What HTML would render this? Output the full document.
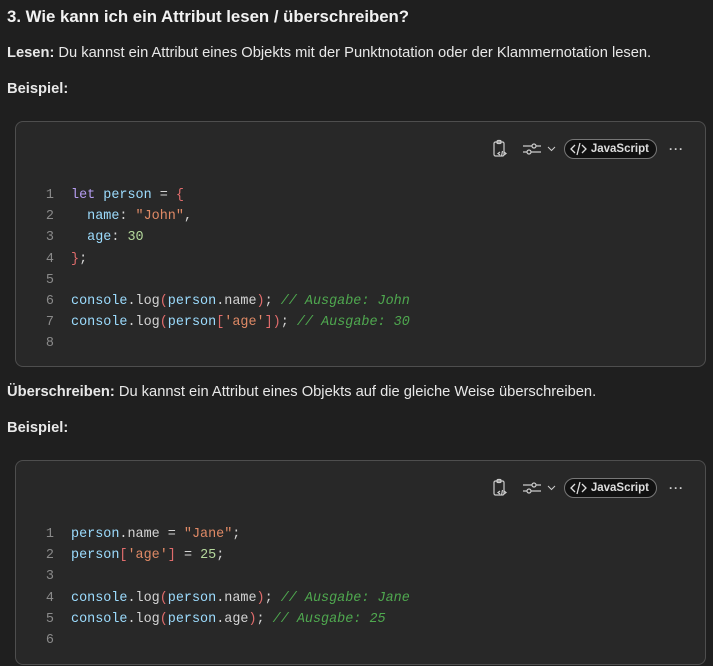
<!DOCTYPE html>
<html><head><meta charset="utf-8"><style>
body{margin:0;background:#1f1f1f;color:#e8e8e8;font-family:"Liberation Sans",sans-serif;width:713px;height:666px;overflow:hidden;position:relative}
h1{position:absolute;left:7px;top:7px;margin:0;font-size:16.8px;font-weight:bold;color:#f2f2f2}
p{position:absolute;left:7px;margin:0;font-size:14.7px;white-space:nowrap}
.blk{position:absolute;left:15px;width:689px;background:#282828;border:1px solid #4e4e4e;border-radius:8px}
.code{position:absolute;left:0;font-family:"Liberation Mono",monospace;font-size:13.45px;line-height:21.2px;white-space:pre;color:#d4d4d4}
.n{display:inline-block;width:38px;text-align:right;color:#8a8a8a;margin-right:17px}
.k{color:#b59cf0}.v{color:#9cdcfe}.s{color:#e08a66}.num{color:#b5d99c}.c{color:#4fa84f;font-style:italic}.b{color:#e06c6c}
.tb{position:absolute;top:15px;right:21px;height:24px;display:flex;align-items:center;color:#ccc;font-size:12px}
.js{border:1px solid #777;border-radius:12px;background:#111;padding:2px 7px 2px 5px;display:flex;align-items:center;gap:4px;color:#ddd;font-weight:bold;font-size:11.5px}
</style></head><body>
<h1>3. Wie kann ich ein Attribut lesen / überschreiben?</h1>
<p style="top:45px"><b>Lesen:</b> Du kannst ein Attribut eines Objekts mit der Punktnotation oder der Klammernotation lesen.</p>
<p style="top:81px"><b>Beispiel:</b></p>

<div class="blk" style="top:121px;height:244px">
 <div class="tb">
  <svg width="18" height="20" viewBox="0 0 18 20" fill="none" stroke="#ccc" stroke-width="1.2"><rect x="2" y="3" width="10" height="14" rx="1.5"/><rect x="5" y="1.5" width="4" height="3" rx="1"/><path d="M8 13l-2 1.5 2 1.5M12 13l2 1.5-2 1.5M10.5 12l-1 5"/></svg>
  <svg style="margin-left:12px" width="20" height="16" viewBox="0 0 20 16" fill="none" stroke="#ccc" stroke-width="1.2"><path d="M1 5h18M1 11h18"/><circle cx="12" cy="5" r="2" fill="#282828"/><circle cx="7" cy="11" r="2" fill="#282828"/></svg>
  <svg style="margin-left:5px" width="9" height="6" viewBox="0 0 9 6" fill="none" stroke="#ccc"><path d="M1 1l3.5 3.5L8 1"/></svg>
  <div class="js" style="margin-left:8px"><svg width="17" height="14" viewBox="0 0 17 14" fill="none" stroke="#ddd" stroke-width="1.3"><path d="M5 3L1 7l4 4M12 3l4 4-4 4M10 1L7 13"/></svg>JavaScript</div>
  <span style="margin-left:12px;font-weight:bold;letter-spacing:1px">···</span>
 </div>
 <div class="code" style="top:63px"><span class="n">1</span><span class="k">let</span> <span class="v">person</span> = <span class="b">{</span>
<span class="n">2</span>  <span class="v">name</span>: <span class="s">"John"</span>,
<span class="n">3</span>  <span class="v">age</span>: <span class="num">30</span>
<span class="n">4</span><span class="b">}</span>;
<span class="n">5</span>
<span class="n">6</span><span class="v">console</span>.log<span class="b">(</span><span class="v">person</span>.name<span class="b">)</span>; <span class="c">// Ausgabe: John</span>
<span class="n">7</span><span class="v">console</span>.log<span class="b">(</span><span class="v">person</span><span class="b">[</span><span class="s">'age'</span><span class="b">])</span>; <span class="c">// Ausgabe: 30</span>
<span class="n">8</span></div>
</div>

<p style="top:384px"><b>Überschreiben:</b> Du kannst ein Attribut eines Objekts auf die gleiche Weise überschreiben.</p>
<p style="top:420px"><b>Beispiel:</b></p>

<div class="blk" style="top:460px;height:203px">
 <div class="tb">
  <svg width="18" height="20" viewBox="0 0 18 20" fill="none" stroke="#ccc" stroke-width="1.2"><rect x="2" y="3" width="10" height="14" rx="1.5"/><rect x="5" y="1.5" width="4" height="3" rx="1"/><path d="M8 13l-2 1.5 2 1.5M12 13l2 1.5-2 1.5M10.5 12l-1 5"/></svg>
  <svg style="margin-left:12px" width="20" height="16" viewBox="0 0 20 16" fill="none" stroke="#ccc" stroke-width="1.2"><path d="M1 5h18M1 11h18"/><circle cx="12" cy="5" r="2" fill="#282828"/><circle cx="7" cy="11" r="2" fill="#282828"/></svg>
  <svg style="margin-left:5px" width="9" height="6" viewBox="0 0 9 6" fill="none" stroke="#ccc"><path d="M1 1l3.5 3.5L8 1"/></svg>
  <div class="js" style="margin-left:8px"><svg width="17" height="14" viewBox="0 0 17 14" fill="none" stroke="#ddd" stroke-width="1.3"><path d="M5 3L1 7l4 4M12 3l4 4-4 4M10 1L7 13"/></svg>JavaScript</div>
  <span style="margin-left:12px;font-weight:bold;letter-spacing:1px">···</span>
 </div>
 <div class="code" style="top:63px"><span class="n">1</span><span class="v">person</span>.name = <span class="s">"Jane"</span>;
<span class="n">2</span><span class="v">person</span><span class="b">[</span><span class="s">'age'</span><span class="b">]</span> = <span class="num">25</span>;
<span class="n">3</span>
<span class="n">4</span><span class="v">console</span>.log<span class="b">(</span><span class="v">person</span>.name<span class="b">)</span>; <span class="c">// Ausgabe: Jane</span>
<span class="n">5</span><span class="v">console</span>.log<span class="b">(</span><span class="v">person</span>.age<span class="b">)</span>; <span class="c">// Ausgabe: 25</span>
<span class="n">6</span></div>
</div>
</body></html>
